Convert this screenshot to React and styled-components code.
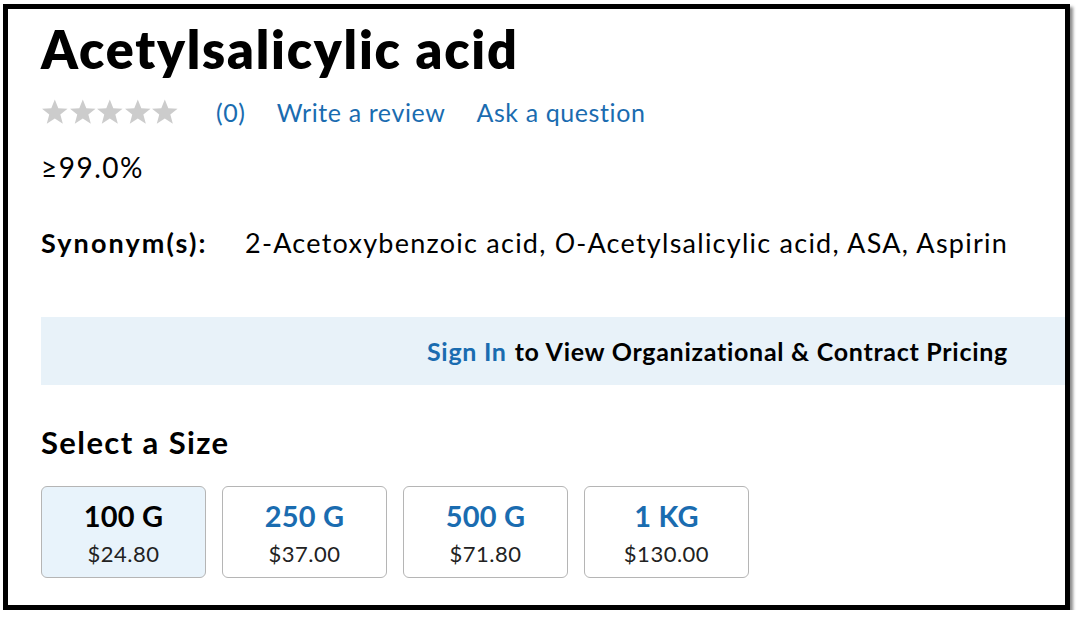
import styled, { createGlobalStyle } from 'styled-components';

const GlobalStyle = createGlobalStyle`
  html, body {
    margin: 0;
    padding: 0;
    background: #fff;
  }
  body {
    font-family: Lato, "Liberation Sans", sans-serif;
    color: #000;
  }
`;

const Frame = styled.div`
  box-sizing: border-box;
  margin: 4px 0 0 3px;
  width: 1067px;
  height: 606px;
  border: 5px solid #000;
  box-shadow: 3px 3px 3px rgba(0, 0, 0, 0.45);
  background: #fff;
  overflow: hidden;
  padding: 9px 0 0 33px;
`;

const Title = styled.h1`
  margin: 0;
  font-size: 52px;
  font-weight: 800;
  line-height: 62px;
  letter-spacing: 1.8px;
`;

const RatingRow = styled.div`
  display: flex;
  align-items: center;
  margin-top: 15px;
  height: 34px;
`;

const Stars = styled.div`
  display: flex;
  margin-right: 37px;
`;

const Link = styled.a`
  color: #1a6cb0;
  font-size: 25px;
  letter-spacing: 0.6px;
  text-decoration: none;
  margin-right: ${p => p.$gap || 0}px;
`;

const Purity = styled.div`
  font-size: 28px;
  letter-spacing: 1.5px;
  margin-top: 23px;
  line-height: 30px;
`;

const SynRow = styled.div`
  display: flex;
  font-size: 27px;
  line-height: 30px;
  margin-top: 46px;
`;

const SynLabel = styled.span`
  font-weight: 700;
  width: 204px;
  letter-spacing: 2.1px;
`;

const SynValue = styled.span`
  letter-spacing: 1.25px;
`;

const Banner = styled.div`
  margin-top: 59px;
  height: 68px;
  background: #e8f2f9;
  display: flex;
  align-items: center;
  justify-content: flex-end;
  padding-right: 57px;
  font-size: 25px;
  font-weight: 700;
  letter-spacing: 0.72px;
`;

const SignIn = styled.span`
  color: #1a6cb0;
  margin-right: 8px;
`;

const SizeHeading = styled.h2`
  margin: 39px 0 0;
  font-size: 31px;
  font-weight: 700;
  letter-spacing: 1.4px;
  line-height: 36px;
`;

const SizeGrid = styled.div`
  display: flex;
  gap: 16px;
  margin-top: 26px;
`;

const SizeCard = styled.button`
  box-sizing: border-box;
  width: 165px;
  height: 92px;
  border: 1px solid #b5b5b5;
  border-radius: 6px;
  background: ${p => (p.$active ? '#e8f3fb' : '#fff')};
  display: flex;
  flex-direction: column;
  align-items: center;
  justify-content: center;
  font-family: inherit;
  padding: 0;
  cursor: pointer;
`;

const SizeLabel = styled.span`
  font-size: 29px;
  font-weight: 700;
  letter-spacing: 0.2px;
  color: ${p => (p.$active ? '#000' : '#1a6cb0')};
  line-height: 34px;
`;

const Price = styled.span`
  font-size: 22px;
  letter-spacing: 0.5px;
  color: #222;
  margin-top: 9px;
  line-height: 24px;
`;

const Star = () => (
  <svg width="27.6" height="26" viewBox="0 0 24 23">
    <polygon
      points="12,0.5 15.1,8.2 23.3,8.6 16.9,13.8 19.1,21.8 12,17.3 4.9,21.8 7.1,13.8 0.7,8.6 8.9,8.2"
      fill="#cccccc"
    />
  </svg>
);

const sizes = [
  { label: '100 G', price: '$24.80', active: true },
  { label: '250 G', price: '$37.00' },
  { label: '500 G', price: '$71.80' },
  { label: '1 KG', price: '$130.00' },
];

const App = () => (
  <>
    <GlobalStyle />
    <Frame>
      <Title>Acetylsalicylic acid</Title>
      <RatingRow>
        <Stars>
          {[0, 1, 2, 3, 4].map(i => (
            <Star key={i} />
          ))}
        </Stars>
        <Link href="#" $gap={31}>(0)</Link>
        <Link href="#" $gap={31}>Write a review</Link>
        <Link href="#">Ask a question</Link>
      </RatingRow>
      <Purity>≥99.0%</Purity>
      <SynRow>
        <SynLabel>Synonym(s):</SynLabel>
        <SynValue>
          2-Acetoxybenzoic acid, <i>O</i>-Acetylsalicylic acid, ASA, Aspirin
        </SynValue>
      </SynRow>
      <Banner>
        <SignIn>Sign In</SignIn> to View Organizational &amp; Contract Pricing
      </Banner>
      <SizeHeading>Select a Size</SizeHeading>
      <SizeGrid>
        {sizes.map(s => (
          <SizeCard key={s.label} $active={s.active}>
            <SizeLabel $active={s.active}>{s.label}</SizeLabel>
            <Price>{s.price}</Price>
          </SizeCard>
        ))}
      </SizeGrid>
    </Frame>
  </>
);

export default App;
